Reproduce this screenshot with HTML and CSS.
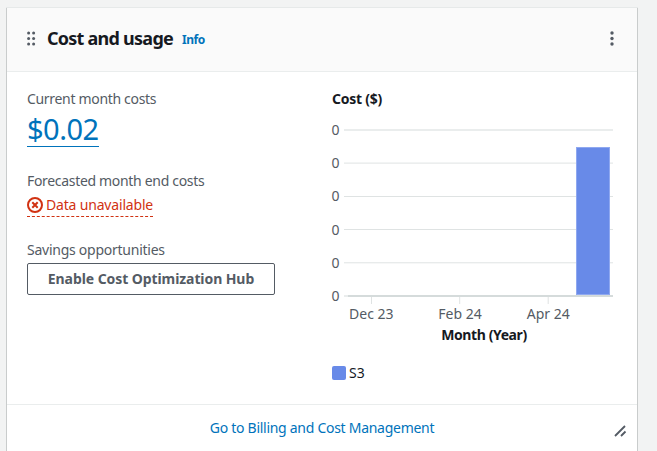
FILE: index.html
```html
<!DOCTYPE html>
<html lang="en">
<head>
<meta charset="utf-8">
<title>Cost and usage</title>
<link rel="stylesheet" href="styles.css">
</head>
<body>
<section class="card">
  <header class="card-header">
    <svg class="drag" width="9" height="15" viewBox="0 0 9 15"><g><circle cx="1.6" cy="2" r="1.5"/><circle cx="6.6" cy="2" r="1.5"/><circle cx="1.6" cy="7.5" r="1.5"/><circle cx="6.6" cy="7.5" r="1.5"/><circle cx="1.6" cy="13" r="1.5"/><circle cx="6.6" cy="13" r="1.5"/></g></svg>
    <h2 class="title">Cost and usage</h2>
    <a class="info">Info</a>
    <svg class="more" width="4" height="15" viewBox="0 0 4 15"><circle cx="2" cy="2" r="1.7"/><circle cx="2" cy="7.5" r="1.7"/><circle cx="2" cy="13" r="1.7"/></svg>
  </header>
  <div class="card-body">
    <div class="summary">
      <div class="label current">Current month costs</div>
      <a class="amount">$0.02</a>
      <div class="label forecast">Forecasted month end costs</div>
      <div class="status">
        <svg width="16" height="16" viewBox="0 0 16 16"><circle cx="8" cy="8" r="7"/><path d="M5.300 5.300l5.400 5.400M10.700 5.300l-5.400 5.400"/></svg>
        <span class="status-text">Data unavailable</span>
      </div>
      <div class="label savings">Savings opportunities</div>
      <button class="enable"><span>Enable Cost Optimization Hub</span></button>
    </div>
    <div class="chart-panel">
      <svg class="chart" width="290" height="260" viewBox="330 88 290 260">
        <text class="heading y-title" x="332" y="104">Cost ($)</text>
        <g class="grid">
          <path class="soft" d="M344 130h269"/>
          <path d="M344 163.1h269M344 196.5h269M344 229.5h269M344 262.8h269"/>
        </g>
        <path class="soft" d="M344 296h5"/>
        <path class="axis" d="M348 296h265"/>
        <path class="grid" d="M371.5 297v7M459.7 297v7M548.2 297v7"/>
        <rect class="bar" x="576.5" y="147.5" width="33" height="147"/>
        <g class="ticks">
          <text x="331.5" y="135">0</text>
          <text x="331.5" y="168">0</text>
          <text x="331.5" y="201">0</text>
          <text x="331.5" y="235">0</text>
          <text x="331.5" y="268">0</text>
          <text x="331.5" y="301">0</text>
        </g>
        <g class="months">
          <text x="371.3" y="319">Dec 23</text>
          <text x="460" y="319">Feb 24</text>
          <text x="548.3" y="319">Apr 24</text>
        </g>
        <text class="heading x-title" x="484" y="340">Month (Year)</text>
      </svg>
      <div class="legend"><i class="swatch"></i><span>S3</span></div>
    </div>
  </div>
  <footer class="card-footer">
    <a class="go">Go to Billing and Cost Management</a>
    <svg class="resize" width="14" height="14" viewBox="0 0 14 14"><path d="M2 12L12 2M8 12l4.500-4.500"/></svg>
  </footer>
</section>
</body>
</html>
```
FILE: styles.css
```css
* { box-sizing: border-box; }
body {
  margin: 0;
  height: 451px;
  overflow: hidden;
  padding: 8px 20px 0 7px;
  background: #f2f3f3;
  font: 14px/20px "Noto Sans", "Open Sans", sans-serif;
  color: #545b64;
}
.card {
  height: 460px;
  background: #fff;
  box-shadow: 0 0 0 1px #e8ebeb, 1px 0 0 0 #c9cccc, -1px 0 0 0 #c9cccc;
  border: solid #c9cccc;
  border-width: 0 1px;
  margin: 0 -1px;
  box-shadow: 0 -1px 0 #e6e9e9;
}
.card-header {
  display: flex;
  align-items: center;
  height: 64px;
  padding: 0 23px 4px 20px;
  background: #fafafa;
  border-bottom: 1px solid #eaeded;
}
.drag, .more { fill: #545b64; flex: none; }
.drag { margin-top: 1px; }
.more { margin: 1px 0 0 auto; }
.title {
  margin: 0 0 0 11px;
  font-size: 18px;
  line-height: 22px;
  font-weight: 700;
  letter-spacing: -0.75px;
  color: #16191f;
  white-space: nowrap;
}
.info {
  margin: 4px 0 0 9px;
  font-size: 12px;
  font-weight: 700;
  letter-spacing: -0.5px;
  color: #0073bb;
}
.card-body { display: flex; height: 332px; }
.summary { width: 323px; padding: 17px 0 0 20px; }
.label { height: 20px; white-space: nowrap; letter-spacing: -0.32px; }
.savings.label { letter-spacing: -0.25px; }
.amount {
  display: block;
  width: 72px;
  height: 38px;
  font-size: 29px;
  line-height: 39px;
  letter-spacing: -0.5px;
  color: #0073bb;
  border-bottom: 1px solid #0073bb;
}
.forecast { margin-top: 24px; }
.status {
  display: flex;
  align-items: center;
  gap: 3px;
  width: 126px;
  height: 26px;
  padding-top: 2px;
  color: #d13212;
  border-bottom: 1px dashed #d13212;
  white-space: nowrap;
  letter-spacing: -0.18px;
}
.status svg { flex: none; fill: none; stroke: #d13212; stroke-width: 2; }
.savings { margin-top: 23px; }
.enable {
  display: block;
  width: 248px;
  height: 32px;
  margin-top: 3px;
  padding: 0;
  border: 1px solid #545b64;
  border-radius: 2px;
  background: #fff;
  color: #545b64;
  font: 700 14px/20px "Noto Sans", "Open Sans", sans-serif;
  letter-spacing: -0.08px;
  white-space: nowrap;
}
.chart-panel { padding-top: 16px; }
.chart { display: block; }
.chart text { font-size: 14px; fill: #545b64; }
.chart .heading { font-weight: 700; fill: #16191f; letter-spacing: -0.4px; }
.chart .y-title { letter-spacing: -0.25px; }
.chart .months text, .chart .x-title { text-anchor: middle; }
.grid { stroke: #dfe3e3; stroke-width: 1; }
.soft { stroke: #eaeded; stroke-width: 2; }
.axis { stroke: #d5dbdb; stroke-width: 2; }
.bar { fill: #688ae8; stroke: #8fa8f0; }
.legend {
  display: flex;
  align-items: center;
  gap: 3px;
  margin: 15px 0 0 2px;
  color: #16191f;
}
.swatch { width: 14px; height: 14px; border-radius: 2px; background: #688ae8; }
.card-footer {
  display: flex;
  justify-content: center;
  position: relative;
  padding-top: 13px;
  border-top: 1px solid #eaeded;
}
.go { color: #0073bb; white-space: nowrap; letter-spacing: -0.28px; }
.resize {
  position: absolute;
  right: 10px;
  top: 19px;
  fill: none;
  stroke: #545b64;
  stroke-width: 1.8;
}
```
